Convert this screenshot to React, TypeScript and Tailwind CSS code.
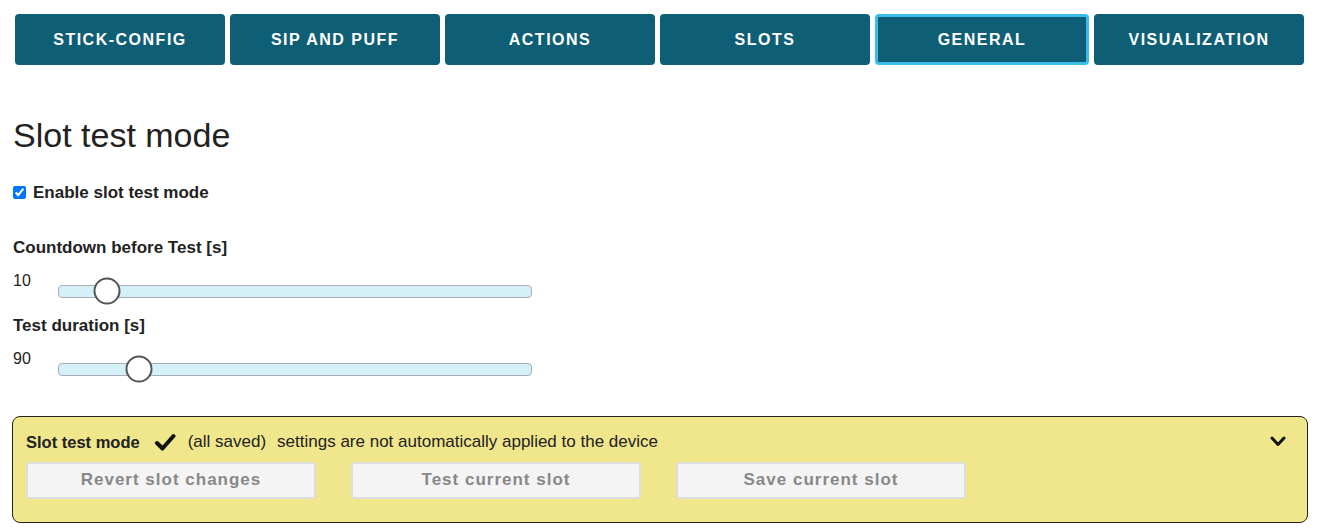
import { useState } from 'react';

const tabs = ['STICK-CONFIG', 'SIP AND PUFF', 'ACTIONS', 'SLOTS', 'GENERAL', 'VISUALIZATION'];

function Slider({ value, pos }: { value: string; pos: number }) {
  return (
    <div className="flex items-start">
      <span className="w-[45px] text-[16px] leading-[18px] text-[#222]">{value}</span>
      <div className="relative mt-[13px] h-[13px] w-[474px] rounded-[4px] border border-[#aab] bg-[#d4f1f8]">
        <div
          className="absolute top-1/2 h-[27px] w-[27px] -translate-x-1/2 -translate-y-1/2 rounded-full border-2 border-[#555] bg-white"
          style={{ left: pos }}
        />
      </div>
    </div>
  );
}

export default function App() {
  const [enabled, setEnabled] = useState(true);

  return (
    <div className="min-h-[528px] bg-white px-[12px] pt-[14px] font-['Liberation_Sans',Arial,sans-serif] text-[#222]">
      <nav className="flex gap-[5px] pl-[3px]">
        {tabs.map((tab) => (
          <button
            key={tab}
            className={
              'flex h-[51px] w-[210px] items-center justify-center rounded-[4px] bg-[#0e5e75] text-[16px] font-bold tracking-[1.5px] text-white ' +
              (tab === 'GENERAL' ? 'w-[214px] border-[3px] border-[#3bbfe8]' : '')
            }
          >
            {tab}
          </button>
        ))}
      </nav>

      <h1 className="mt-[50px] pl-[1px] text-[34px] leading-[40px] text-[#222]">Slot test mode</h1>

      <label className="mt-[25px] flex items-center gap-[7px] pl-[1px] text-[17px] font-bold">
        <input
          type="checkbox"
          checked={enabled}
          onChange={(e) => setEnabled(e.target.checked)}
          className="h-[13px] w-[13px] accent-[#0075ff]"
        />
        Enable slot test mode
      </label>

      <div className="mt-[32px] pl-[1px]">
        <div className="text-[17px] font-bold leading-[20px]">Countdown before Test [s]</div>
        <div className="mt-[14px]">
          <Slider value="10" pos={48} />
        </div>
        <div className="mt-[18px] text-[17px] font-bold leading-[20px]">Test duration [s]</div>
        <div className="mt-[14px]">
          <Slider value="90" pos={80} />
        </div>
      </div>

      <section className="mt-[40px] h-[107px] w-[1296px] rounded-[8px] border border-[#222] bg-[#f0e68c] px-[13px] pt-[14px]">
        <div className="flex items-center text-[17px] leading-[22px]">
          <span className="text-[16.5px] font-bold">Slot test mode</span>
          <svg className="ml-[14px] mr-[12px]" width="22" height="18" viewBox="0 0 22 18">
            <path d="M3 10 L8.5 15.5 L19.5 3" fill="none" stroke="#111" strokeWidth="4" strokeLinecap="round" strokeLinejoin="round" />
          </svg>
          <span>(all saved)</span>
          <span className="ml-[11px]">settings are not automatically applied to the device</span>
          <svg className="ml-auto mr-[8px]" width="16" height="11" viewBox="0 0 16 11">
            <path d="M2 2 L8 8.5 L14 2" fill="none" stroke="#111" strokeWidth="3" strokeLinecap="round" strokeLinejoin="round" />
          </svg>
        </div>
        <div className="mt-[9px] flex gap-[35px]">
          {['Revert slot changes', 'Test current slot', 'Save current slot'].map((b) => (
            <button
              key={b}
              disabled
              className="h-[37px] w-[290px] rounded-[3px] border-2 border-[#ddd] bg-[#f4f4f4] text-[17px] font-bold tracking-[1px] text-[#888]"
            >
              {b}
            </button>
          ))}
        </div>
      </section>
    </div>
  );
}
